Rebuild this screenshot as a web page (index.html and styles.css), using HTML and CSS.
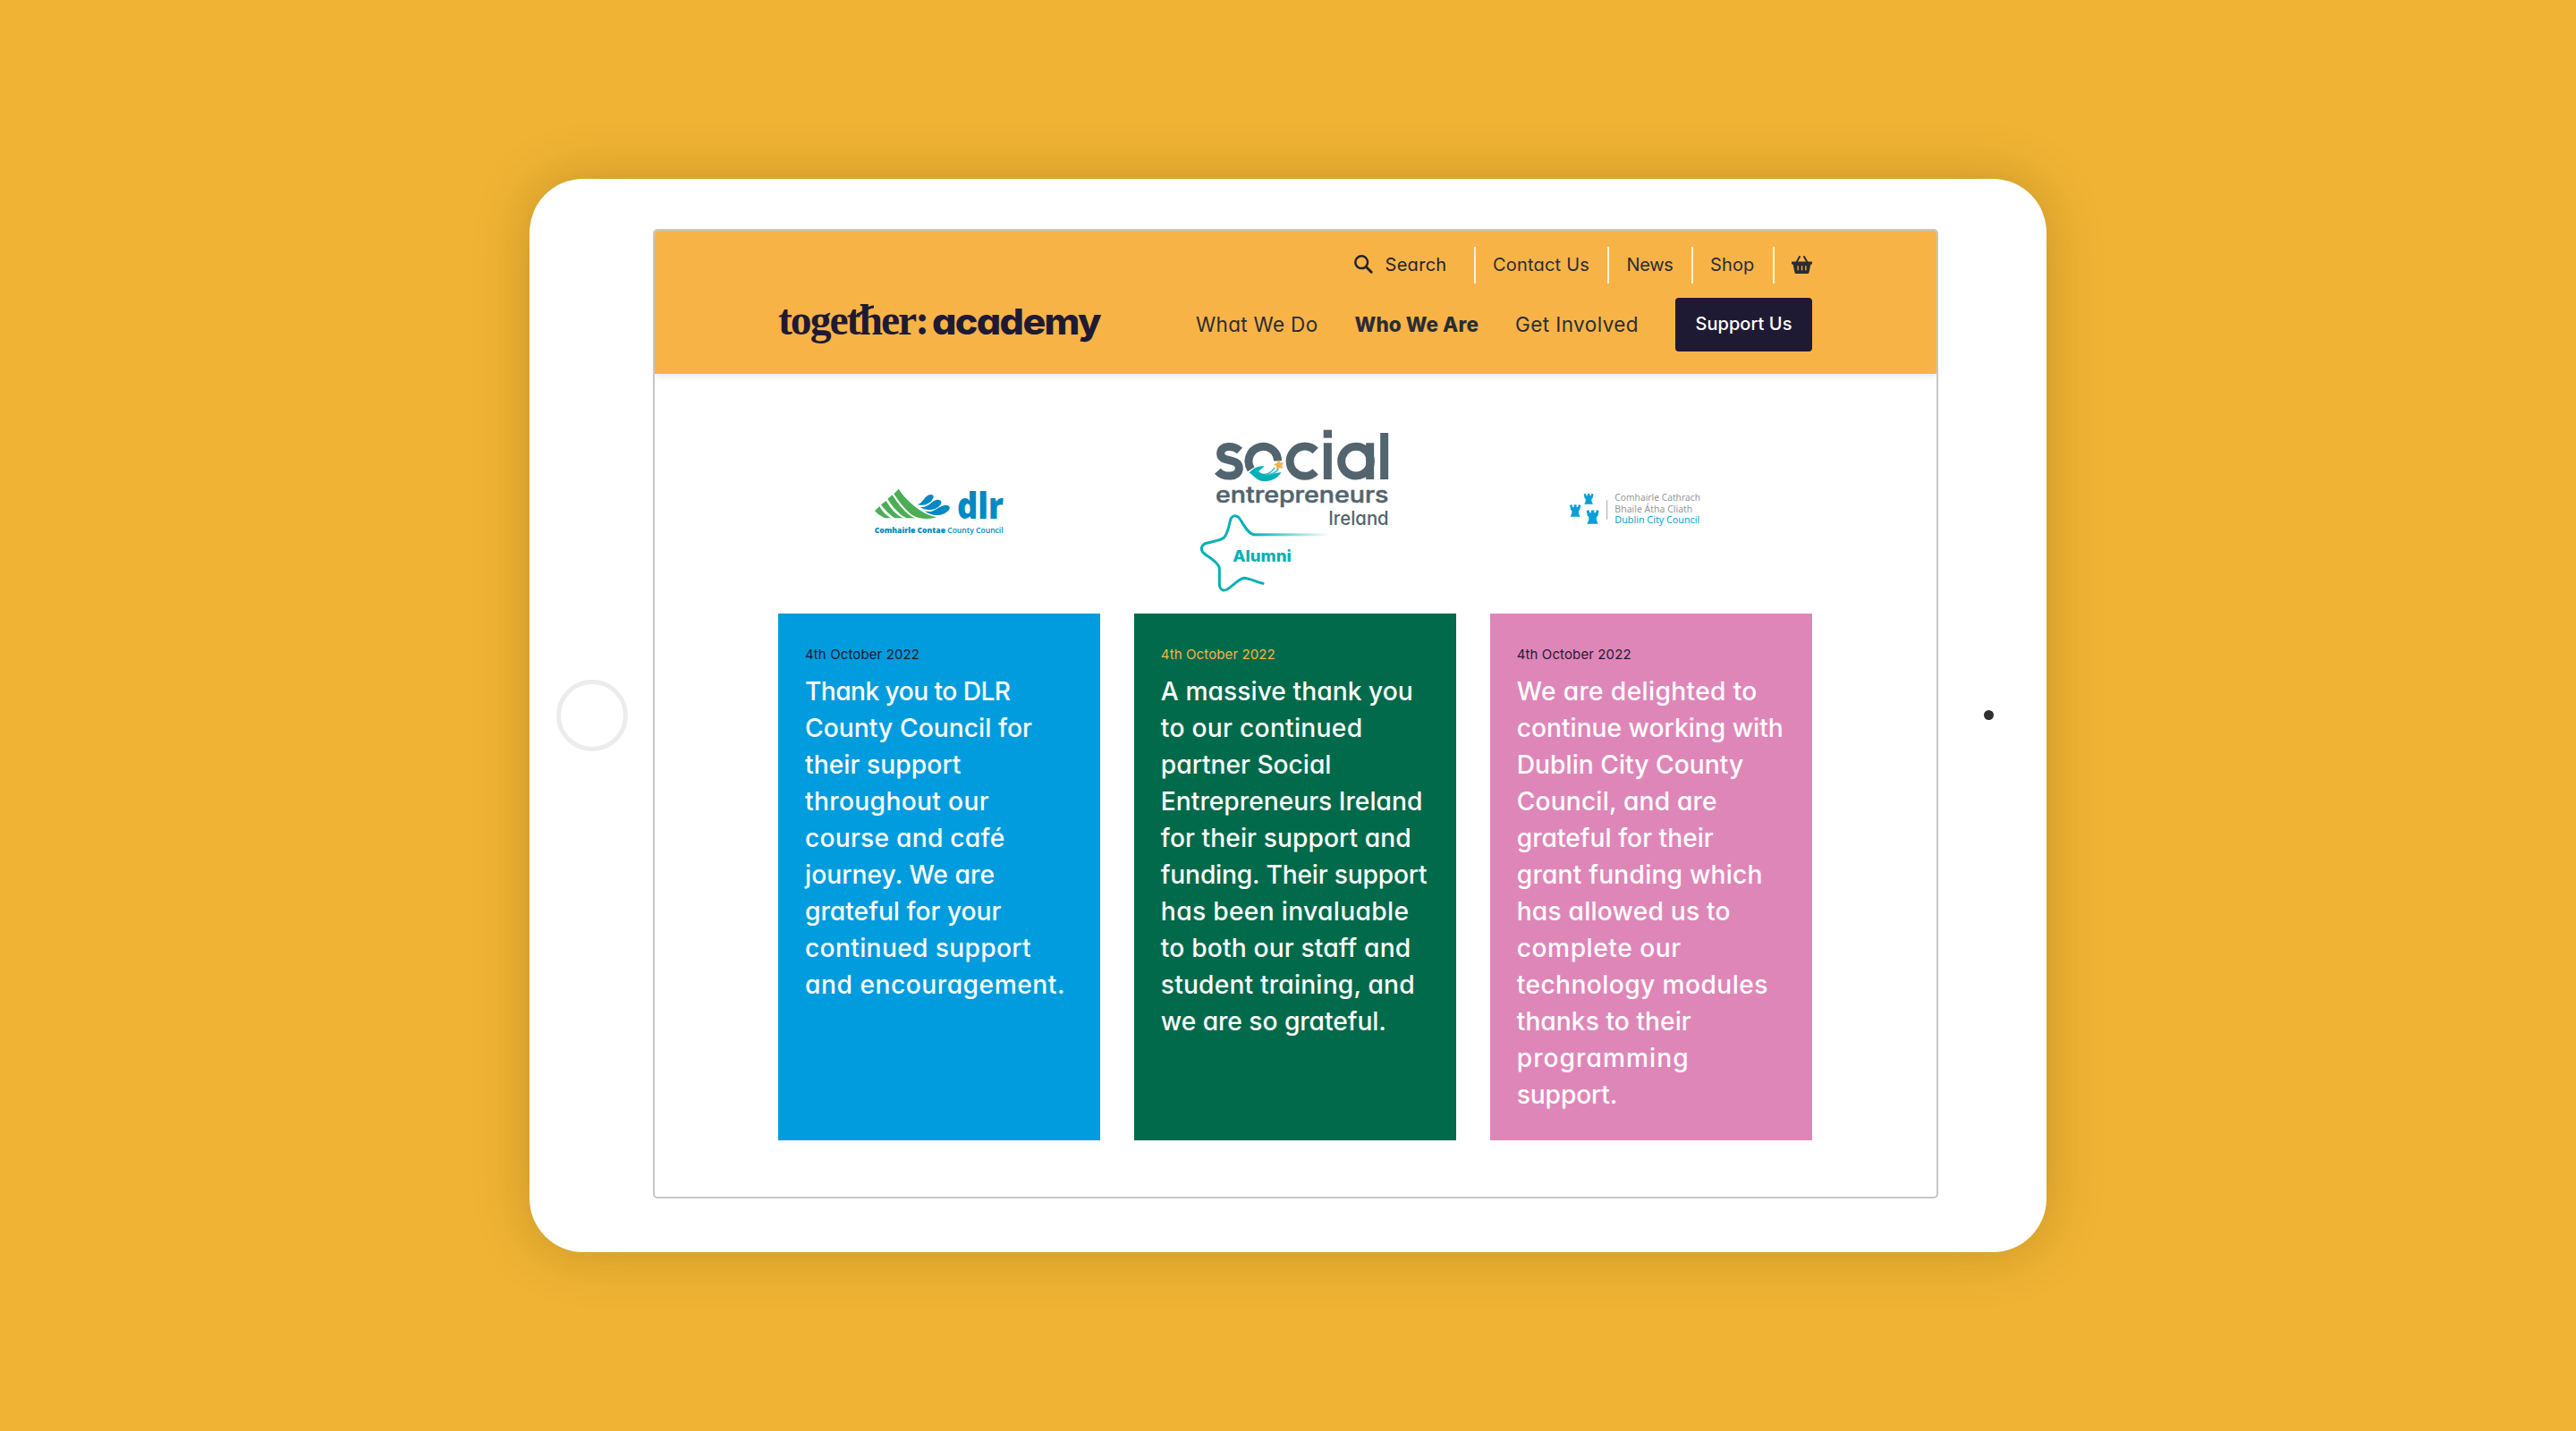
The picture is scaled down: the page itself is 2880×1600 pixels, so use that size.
FILE: index.html
```html
<!DOCTYPE html>
<html lang="en">
<head>
<meta charset="utf-8">
<title>together: academy</title>
<link rel="stylesheet" href="styles.css">
</head>
<body>
<div class="tablet">
  <div class="bezel bezel-left"><span class="home"></span></div>
  <div class="screen">
    <header class="header">
      <svg class="brand" viewBox="0 0 362 60" width="362" height="60">
        <text class="brand-serif" x="0" y="43.5" textLength="167" lengthAdjust="spacingAndGlyphs">together:</text>
        <path class="brand-tie" d="M88 22C97 20 98 13 107 13"/>
        <text class="brand-sans" x="172" y="43.5" textLength="188" lengthAdjust="spacingAndGlyphs">academy</text>
      </svg>
      <div class="navs">
        <nav class="top-nav">
          <a class="search"><svg width="21" height="21" viewBox="0 0 21 21"><circle cx="8.200" cy="8.200" r="6.900" fill="none" stroke="#23242a" stroke-width="2.500"/><path d="M13.200 13.200l6 6" stroke="#23242a" stroke-width="3" stroke-linecap="round"/></svg><span class="fit" data-w="69">Search</span></a>
          <a class="item"><span class="fit" data-w="108">Contact Us</span></a>
          <a class="item"><span class="fit" data-w="52">News</span></a>
          <a class="item"><span class="fit" data-w="49.5">Shop</span></a>
          <a class="item basket"><svg width="23" height="20" viewBox="0 0 23 20"><path d="M5 8L9 1M18 8L14 1" stroke="#2b2d31" stroke-width="2" stroke-linecap="round"/><path fill="#2b2d31" fill-rule="evenodd" d="M1 6.5H22a1 1 0 0 1 0 3H21.4L19.6 18.4Q19.3 20 17.8 20H5.200Q3.700 20 3.400 18.400L1.600 9.500H1a1 1 0 0 1 0-3zM6.500 11.200v5h1.300v-5zM10.900 11.200v5h1.300v-5zM15.200 11.200v5h1.300v-5z"/></svg></a>
        </nav>
        <nav class="main-nav">
          <a><span class="fit" data-w="136.500">What We Do</span></a>
          <a class="active"><span class="fit" data-w="138.500">Who We Are</span></a>
          <a><span class="fit" data-w="138">Get Involved</span></a>
          <a class="button"><span class="fit" data-w="108">Support Us</span></a>
        </nav>
      </div>
    </header>
    <main class="content">
      <div class="logos">
        <svg width="180" height="80" viewBox="0 0 540 240">
          <g fill="#4bae56">
            <path d="M134 50C165 95 210 135 262 145C235 154 200 150 180 138C155 120 135 92 118 67z"/>
            <path d="M113 70C132 100 160 138 190 148H160C135 135 112 108 97 83z"/>
            <path d="M92 90C108 116 128 140 150 148H122C104 138 88 120 75 103z"/>
            <path d="M70 108C80 128 96 142 110 148H88C75 142 62 134 54 124z"/>
          </g>
          <g fill="#0089c4">
            <path d="M196 103C215 100 220 72 240 69Q254 68 250 80C242 100 218 108 196 103z"/>
            <path d="M205 110C235 115 242 90 262 86Q280 86 277 98C268 120 230 128 205 110z"/>
            <path d="M220 124C250 134 265 108 290 104Q308 104 305 117C290 142 248 146 220 124z"/>
          </g>
          <text class="dlr" x="330" y="149" textLength="156" lengthAdjust="spacingAndGlyphs">dlr</text>
          <text class="dlr-sub" x="53" y="197" textLength="432" lengthAdjust="spacingAndGlyphs"><tspan font-weight="800">Comhairle Contae</tspan> County Council</text>
        </svg>
        <svg class="sei" width="260" height="220" viewBox="0 0 780 660">
          <defs><linearGradient id="fade" gradientUnits="userSpaceOnUse" x1="245" y1="0" x2="500" y2="0"><stop offset="0" stop-color="#07b0b8"/><stop offset="1" stop-color="#07b0b8" stop-opacity="0"/></linearGradient></defs>
          <g fill="none" stroke="#52646e" stroke-width="27">
            <path d="M198 132C180 115 134 110 134 142C134 174 196 154 196 190C196 224 144 222 124 200"/>
            <path d="M236 194A49 49 0 1 1 326 166"/>
            <path d="M452 132A50 50 0 1 0 452 202"/>
            <circle cx="588" cy="167" r="49"/>
            <path d="M493 106V228M635 106V228M683 72V228"/>
          </g>
          <rect x="479" y="62" width="28" height="27" fill="#52646e"/>
          <path fill="#07b0b8" d="M230 206C245 190 258 183 280 184C274 194 264 196 262 202C275 218 320 206 338 204C325 226 300 236 275 234C252 230 246 214 230 206z"/>
          <path d="M283 212C300 208 310 198 316 188M292 213C310 210 322 202 328 192" stroke="#3dc0c6" stroke-width="5" fill="none"/>
          <path fill="#f9b14b" d="M329 162l5 10 11 0-6 9 4 11-12-3-9 7-1-12-9-6 11-5z"/>
          <text class="sei-mid" x="117" y="306" textLength="580" lengthAdjust="spacingAndGlyphs">entrepreneurs</text>
          <text class="sei-small" x="496" y="380" textLength="202" lengthAdjust="spacingAndGlyphs">Ireland</text>
          <g fill="none" stroke="#07b0b8" stroke-width="9" stroke-linecap="round" stroke-linejoin="round">
            <path d="M245 413C222 408 208 372 195 356Q180 344 169 358C162 378 160 408 145 424C128 436 102 436 80 444Q63 456 74 472C90 488 120 500 129 522C132 545 128 570 131 588Q138 606 156 597C176 584 195 562 212 559C232 560 254 572 276 577"/>
          </g>
          <rect x="243" y="409" width="257" height="9" fill="url(#fade)"/>
          <text class="alumni" x="175" y="503" textLength="196" lengthAdjust="spacingAndGlyphs">Alumni</text>
        </svg>
        <svg class="dcc" width="200" height="80" viewBox="0 0 600 240">
          <defs><path id="castle" d="M0 3L7 0L10 8H14V1H23V8H27L30 0L37 3L34 16L30 20V28L35 38H2L7 28V20L3 16z"/></defs>
          <g fill="#0a9fd8">
            <use href="#castle" transform="translate(122 65) scale(.88 .95)"/>
            <use href="#castle" transform="translate(75 102) scale(1 1.080)"/>
            <use href="#castle" transform="translate(131 120) scale(1.130 1.240)"/>
          </g>
          <path d="M200 88V152" stroke="#a5a7aa" stroke-width="3"/>
          <g class="dcc-text">
            <text x="226" y="90" textLength="287" lengthAdjust="spacingAndGlyphs">Comhairle Cathrach</text>
            <text x="226" y="129" textLength="261" lengthAdjust="spacingAndGlyphs">Bhaile Átha Cliath</text>
            <text class="dcc-blue" x="226" y="166" textLength="285" lengthAdjust="spacingAndGlyphs">Dublin City Council</text>
          </g>
        </svg>
      </div>
      <div class="cards">
        <article class="card blue">
          <time><span class="fit" data-w="128">4th October 2022</span></time>
          <p><span class="fit" data-w="229.500">Thank you to DLR</span><br><span class="fit" data-w="254">County Council for</span><br><span class="fit" data-w="174.500">their support</span><br><span class="fit" data-w="206">throughout our</span><br><span class="fit" data-w="223.500">course and café</span><br><span class="fit" data-w="212">journey. We are</span><br><span class="fit" data-w="219.500">grateful for your</span><br><span class="fit" data-w="253">continued support</span><br><span class="fit" data-w="291">and encouragement.</span></p>
        </article>
        <article class="card green">
          <time><span class="fit" data-w="128">4th October 2022</span></time>
          <p><span class="fit" data-w="282">A massive thank you</span><br><span class="fit" data-w="225.500">to our continued</span><br><span class="fit" data-w="190.500">partner Social</span><br><span class="fit" data-w="292.500">Entrepreneurs Ireland</span><br><span class="fit" data-w="280">for their support and</span><br><span class="fit" data-w="297.500">funding. Their support</span><br><span class="fit" data-w="277.500">has been invaluable</span><br><span class="fit" data-w="279.500">to both our staff and</span><br><span class="fit" data-w="284">student training, and</span><br><span class="fit" data-w="252">we are so grateful.</span></p>
        </article>
        <article class="card pink">
          <time><span class="fit" data-w="128">4th October 2022</span></time>
          <p><span class="fit" data-w="269">We are delighted to</span><br><span class="fit" data-w="298">continue working with</span><br><span class="fit" data-w="253.500">Dublin City County</span><br><span class="fit" data-w="224">Council, and are</span><br><span class="fit" data-w="220">grateful for their</span><br><span class="fit" data-w="275">grant funding which</span><br><span class="fit" data-w="239">has allowed us to</span><br><span class="fit" data-w="184">complete our</span><br><span class="fit" data-w="281">technology modules</span><br><span class="fit" data-w="195">thanks to their</span><br><span class="fit" data-w="193">programming</span><br><span class="fit" data-w="112.500">support.</span></p>
        </article>
      </div>
    </main>
  </div>
  <div class="bezel bezel-right"><span class="camera"></span></div>
</div>
<script src="fit.js"></script>
</body>
</html>
```
FILE: styles.css
```css
* { box-sizing: border-box; }
body {
  margin: 0;
  width: 2880px;
  height: 1600px;
  overflow: hidden;
  display: flex;
  justify-content: center;
  align-items: center;
  background: #f0b333;
  font-family: Inter, "Open Sans", sans-serif;
  font-feature-settings: "cv11";
  color: #2b2d31;
}
.tablet {
  width: 1696px;
  height: 1200px;
  padding: 56px 0 60px;
  display: flex;
  border-radius: 60px;
  background: #fff;
  box-shadow: 0 0 60px rgba(60, 60, 20, .25);
}
.bezel { display: flex; align-items: center; }
.bezel-left { width: 138px; padding: 4px 0 0 30px; }
.bezel-right { width: 121px; padding: 3px 0 0 51px; }
.home { width: 80px; height: 80px; border: 5px solid #ececec; border-radius: 50%; }
.camera { width: 11px; height: 11px; border-radius: 50%; background: #303030; }
.screen {
  width: 1437px;
  height: 1084px;
  border: 2px solid #c6c6c8;
  border-radius: 5px;
  overflow: hidden;
}
.header {
  height: 160px;
  padding: 0 139px 0 138px;
  display: flex;
  justify-content: space-between;
  background: #f8b347;
  box-shadow: 0 2px 8px rgba(0, 0, 0, .1);
}
.brand { margin-top: 72px; overflow: visible; }
.brand-serif { font: 700 48px "Liberation Serif", serif; letter-spacing: -2px; fill: #1f1a33; }
.brand-sans { font: 800 40px Inter, sans-serif; font-feature-settings: "cv11"; letter-spacing: -1.500px; fill: #1f1a33; }
.brand-tie { fill: none; stroke: #1f1a33; stroke-width: 3; }
.fit { display: inline-block; white-space: nowrap; }
.navs { padding-top: 18px; }
.top-nav {
  height: 41px;
  display: flex;
  justify-content: flex-end;
  font-size: 20px;
}
.top-nav a { display: flex; align-items: center; padding-bottom: 2px; }
.top-nav .search { gap: 14px; padding-right: 30px; color: #23242a; }
.top-nav .item { padding: 0 20px 2px 19.500px; border-left: 2px solid #fdf1dd; }
.top-nav .basket { padding-right: 0; }
.main-nav {
  margin-top: 16px;
  height: 60px;
  display: flex;
  align-items: center;
  gap: 41px;
  font-size: 22.500px;
}
.main-nav a { padding-bottom: 2px; }
.active { font-weight: 800; }
.button {
  width: 153px;
  height: 60px;
  display: flex;
  align-items: center;
  justify-content: center;
  border-radius: 4px;
  background: #1f1a33;
  color: #fff;
  font-size: 20px;
  font-weight: 500;
}
.content { padding: 0 139px 0 138px; }
.logos, .cards {
  display: grid;
  grid-template-columns: repeat(3, 1fr);
  column-gap: 37.600px;
}
.logos {
  height: 268px;
  padding-top: 36px;
  align-items: center;
  justify-items: center;
}
.logos svg { margin: -20px 0; }
.logos .sei { margin-left: 4px; }
.logos .dcc { margin-left: -32px; }
.dlr { font: 800 124px "Open Sans", sans-serif; fill: #0089c4; }
.dlr-sub { font: 600 27px "Open Sans", sans-serif; fill: #0089c4; }
.sei-mid { font: 500 76px Inter, sans-serif; fill: #52646e; stroke: #52646e; stroke-width: 1.500; }
.sei-small { font: 500 63px Inter, sans-serif; font-feature-settings: "cv11"; fill: #52646e; }
.alumni { font: 800 53px Inter, sans-serif; fill: #07b0b8; }
.dcc-text { font: 400 34px "Noto Sans", sans-serif; fill: #96989b; }
.dcc-blue { fill: #0a9fd8; }
.card { height: 589px; padding: 30px; color: #fff; }
.card time {
  display: block;
  height: 28px;
  line-height: 31px;
  font-size: 15px;
  color: #1f1a33;
}
.card p { margin: 9px 0 0; font-size: 28.200px; font-weight: 500; line-height: 41px; }
.card .fit { vertical-align: top; }
.blue { background: #009cde; }
.green { background: #006a4a; }
.green time { color: #f8b347; }
.pink { background: #df86b9; }
```
FILE: fit.js
```js
// Tracks each line so that it fills its typeset width.
document.querySelectorAll('.fit').forEach(function (el) {
  var target = parseFloat(el.dataset.w);
  var natural = el.getBoundingClientRect().width;
  el.style.letterSpacing = (target - natural) / el.textContent.length + 'px';
});
```
